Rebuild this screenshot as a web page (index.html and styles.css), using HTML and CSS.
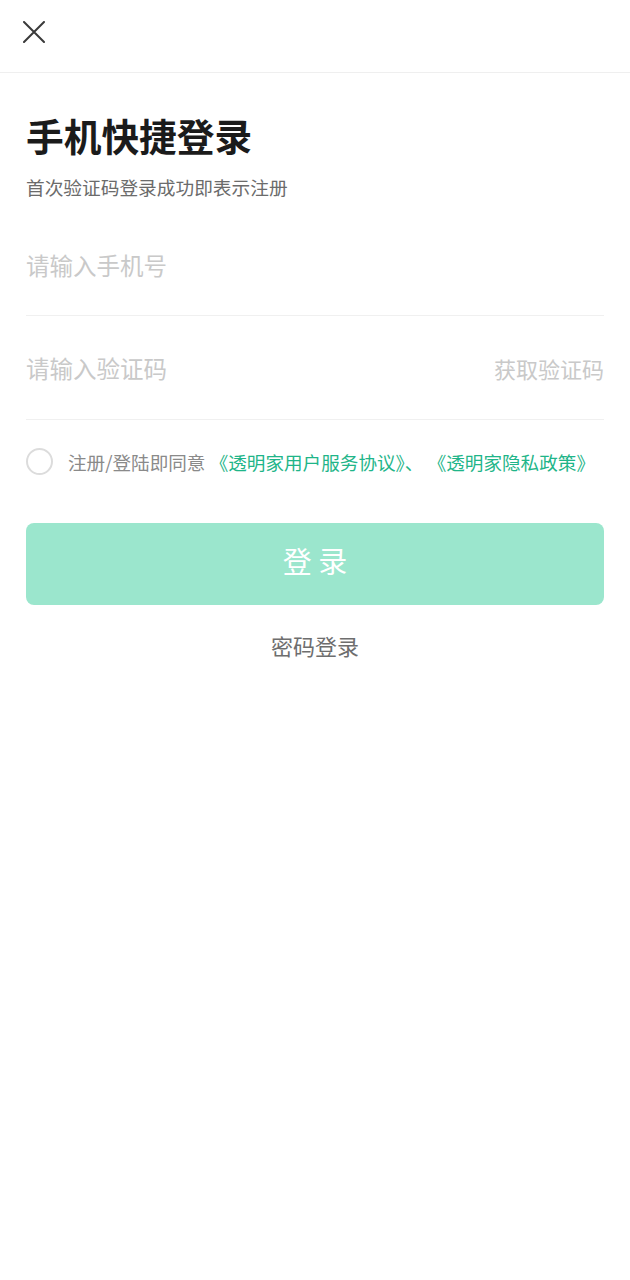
FILE: index.html
```html
<!DOCTYPE html>
<html lang="zh-CN">
<head>
  <meta charset="UTF-8" />
  <meta name="viewport" content="width=device-width, initial-scale=1.0"/>
  <title>手机快捷登录</title>
  <link rel="stylesheet" href="styles.css">
</head>
<body>
  <header class="top-bar">
    <button class="close-btn" aria-label="关闭">
      <svg width="22" height="22" viewBox="0 0 22 22">
        <path d="M1 1 L21 21 M21 1 L1 21" stroke="#3a3a3a" stroke-width="2" fill="none" stroke-linecap="round"/>
      </svg>
    </button>
  </header>

  <main class="login">
    <h1 class="title">手机快捷登录</h1>
    <p class="subtitle">首次验证码登录成功即表示注册</p>

    <div class="field phone">
      <input type="tel" placeholder="请输入手机号" />
    </div>
    <div class="field">
      <input type="text" placeholder="请输入验证码" />
      <span class="get-code">获取验证码</span>
    </div>

    <div class="agree">
      <span class="check"></span>
      <p>注册/登陆即同意 <a href="#">《透明家用户服务协议》、</a> <a href="#">《透明家隐私政策》</a></p>
    </div>

    <button class="submit">登 录</button>
    <p class="alt-login">密码登录</p>
  </main>
</body>
</html>
```

FILE: styles.css
```css
* { box-sizing: border-box; }
body {
  margin: 0;
  font-family: "Noto Sans CJK SC", "Noto Sans", sans-serif;
  background: #fff;
  color: #1a1a1a;
}
.top-bar {
  height: 73px;
  padding: 21px 0 0 23px;
  border-bottom: 1px solid #efefef;
}
.close-btn {
  background: none;
  border: none;
  padding: 0;
  width: 22px;
  height: 22px;
  cursor: pointer;
}
.login {
  padding: 0 26px;
}
.title {
  margin: 37px 0 0;
  font-size: 37.7px;
  line-height: 50px;
  font-weight: 700;
  color: #1b1b1b;
}
.subtitle {
  margin: 14px 0 0;
  font-size: 18.7px;
  line-height: 26px;
  color: #6b6b6b;
}
.field {
  display: flex;
  align-items: center;
  height: 104px;
  border-bottom: 1px solid #f0f0f0;
}
.field.phone { height: 116px; padding-top: 15px; }
.field input {
  flex: 1;
  border: none;
  outline: none;
  padding: 0;
  font-family: inherit;
  font-size: 23.5px;
  color: #333;
  background: none;
}
.field input::placeholder { color: #c9c9c9; }
.get-code {
  font-size: 22px;
  color: #c9c9c9;
}
.agree {
  display: flex;
  align-items: center;
  gap: 15px;
  height: 83px;
}
.check {
  flex: none;
  width: 27px;
  height: 27px;
  border: 2px solid #dcdcdc;
  border-radius: 50%;
}
.agree p {
  margin: 0;
  font-size: 18.6px;
  color: #8a8a8a;
  white-space: nowrap;
}
.agree a {
  color: #1fb589;
  text-decoration: none;
}
.submit {
  display: block;
  width: 100%;
  height: 82px;
  margin-top: 20px;
  padding: 0 0 8px;
  border: none;
  border-radius: 8px;
  background: #9be6cd;
  color: #fff;
  font-family: inherit;
  font-size: 29px;
}
.alt-login {
  margin: 24px 0 0;
  text-align: center;
  font-size: 22px;
  color: #6e6e6e;
}
```
